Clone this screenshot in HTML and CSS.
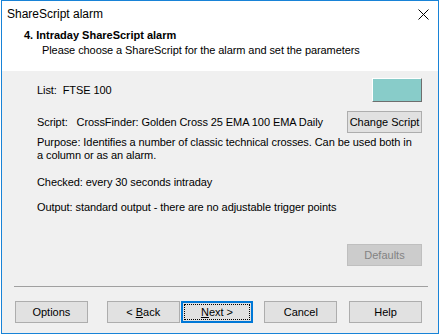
FILE: index.html
```
<!DOCTYPE html>
<html lang="en">
<head>
  <meta charset="UTF-8" />
  <title>ShareScript alarm</title>
  <link rel="stylesheet" href="styles.css">
</head>
<body>
  <div class="window">
    <div class="titlebar">
      <span class="title">ShareScript alarm</span>
      <svg class="close" width="11" height="11" viewBox="0 0 11 11">
        <path d="M0.5 0.5 L10.5 10.5 M10.5 0.5 L0.5 10.5" stroke="#000" stroke-width="1" fill="none"/>
      </svg>
    </div>

    <div class="header">
      <div class="step">4. Intraday ShareScript alarm</div>
      <div class="subtitle">Please choose a ShareScript for the alarm and set the parameters</div>
    </div>

    <div class="content">
      <div class="row row-list">
        <span>List:&nbsp; FTSE 100</span>
        <button class="swatch"></button>
      </div>
      <div class="row row-script">
        <span>Script:&nbsp;&nbsp; CrossFinder: Golden Cross 25 EMA 100 EMA Daily</span>
        <button class="btn">Change Script</button>
      </div>
      <p class="purpose">Purpose: Identifies a number of classic technical crosses. Can be used both in a column or as an alarm.</p>
      <p class="checked">Checked: every 30 seconds intraday</p>
      <p class="output">Output: standard output - there are no adjustable trigger points</p>
      <div class="row row-defaults">
        <button class="btn" disabled>Defaults</button>
      </div>

      <div class="separator"></div>

      <div class="buttons">
        <button class="btn btn-options">Options</button>
        <button class="btn btn-back">&lt; <u>B</u>ack</button>
        <button class="btn btn-next"><span class="focus"><u>N</u>ext &gt;</span></button>
        <button class="btn btn-cancel">Cancel</button>
        <button class="btn btn-help">Help</button>
      </div>
    </div>
  </div>
</body>
</html>
```
FILE: styles.css
```
body {
  margin: 0;
  background: #ffffff;
  font-family: "Liberation Sans", Arial, sans-serif;
  font-size: 11px;
  color: #000;
}
.window {
  margin-left: 1px;
  width: 438px;
  height: 334px;
  box-sizing: border-box;
  border: 1px solid #1883d7;
  display: flex;
  flex-direction: column;
  background: #f0f0f0;
}
.titlebar {
  height: 24px;
  background: #fff;
  display: flex;
  align-items: center;
  justify-content: space-between;
  padding: 0 9px 0 5px;
}
.title {
  font-size: 12px;
  margin-top: 1px;
}
.close {
  margin-top: 3px;
}
.header {
  background: #fff;
  height: 46px;
  box-sizing: border-box;
  padding-top: 4px;
}
.step {
  font-weight: bold;
  line-height: 13px;
  padding-left: 22px;
}
.subtitle {
  line-height: 13px;
  margin-top: 2px;
  padding-left: 40px;
  letter-spacing: -0.08px;
}
.content {
  flex: 1;
  padding: 7px 16px 0 35px;
  display: flex;
  flex-direction: column;
  letter-spacing: -0.08px;
}
.row {
  display: flex;
  align-items: center;
  justify-content: space-between;
}
.row-script {
  margin-top: 9px;
}
.row-defaults {
  margin-top: 30px;
  justify-content: flex-end;
}
.content p {
  margin: 0;
  line-height: 13px;
}
.purpose {
  margin-top: 3px !important;
  padding-right: 5px;
}
.checked {
  margin-top: 14px !important;
}
.output {
  margin-top: 12px !important;
}
.swatch {
  width: 50px;
  height: 24px;
  box-sizing: border-box;
  background: #88ccc9;
  border: 1px solid;
  border-color: #ffffff #6e6e6e #6e6e6e #ffffff;
  padding: 0;
}
.btn {
  height: 22px;
  width: 75px;
  box-sizing: border-box;
  background: #e1e1e1;
  border: 1px solid #adadad;
  border-radius: 0;
  font-family: inherit;
  font-size: 11px;
  letter-spacing: 0;
  color: #000;
  padding: 0;
}
.btn:disabled {
  background: #cccccc;
  border-color: #bfbfbf;
  color: #838383;
}
.separator {
  margin: 20px -6px 0 -23px;
  border-top: 1px solid #a0a0a0;
}
.buttons {
  display: flex;
  margin: 14px 0 0 -22px;
}
.buttons .btn {
  width: 74px;
}
.btn-back {
  margin-left: 19px;
}
.btn-next {
  margin-left: 1px;
  border: 2px solid #0078d7;
  display: flex;
  padding: 1px;
}
.btn-next .focus {
  flex: 1;
  border: 1px dotted #000;
  display: flex;
  align-items: center;
  justify-content: center;
}
.btn-cancel {
  margin-left: 11px;
}
.btn-help {
  margin-left: 12px;
}
```
